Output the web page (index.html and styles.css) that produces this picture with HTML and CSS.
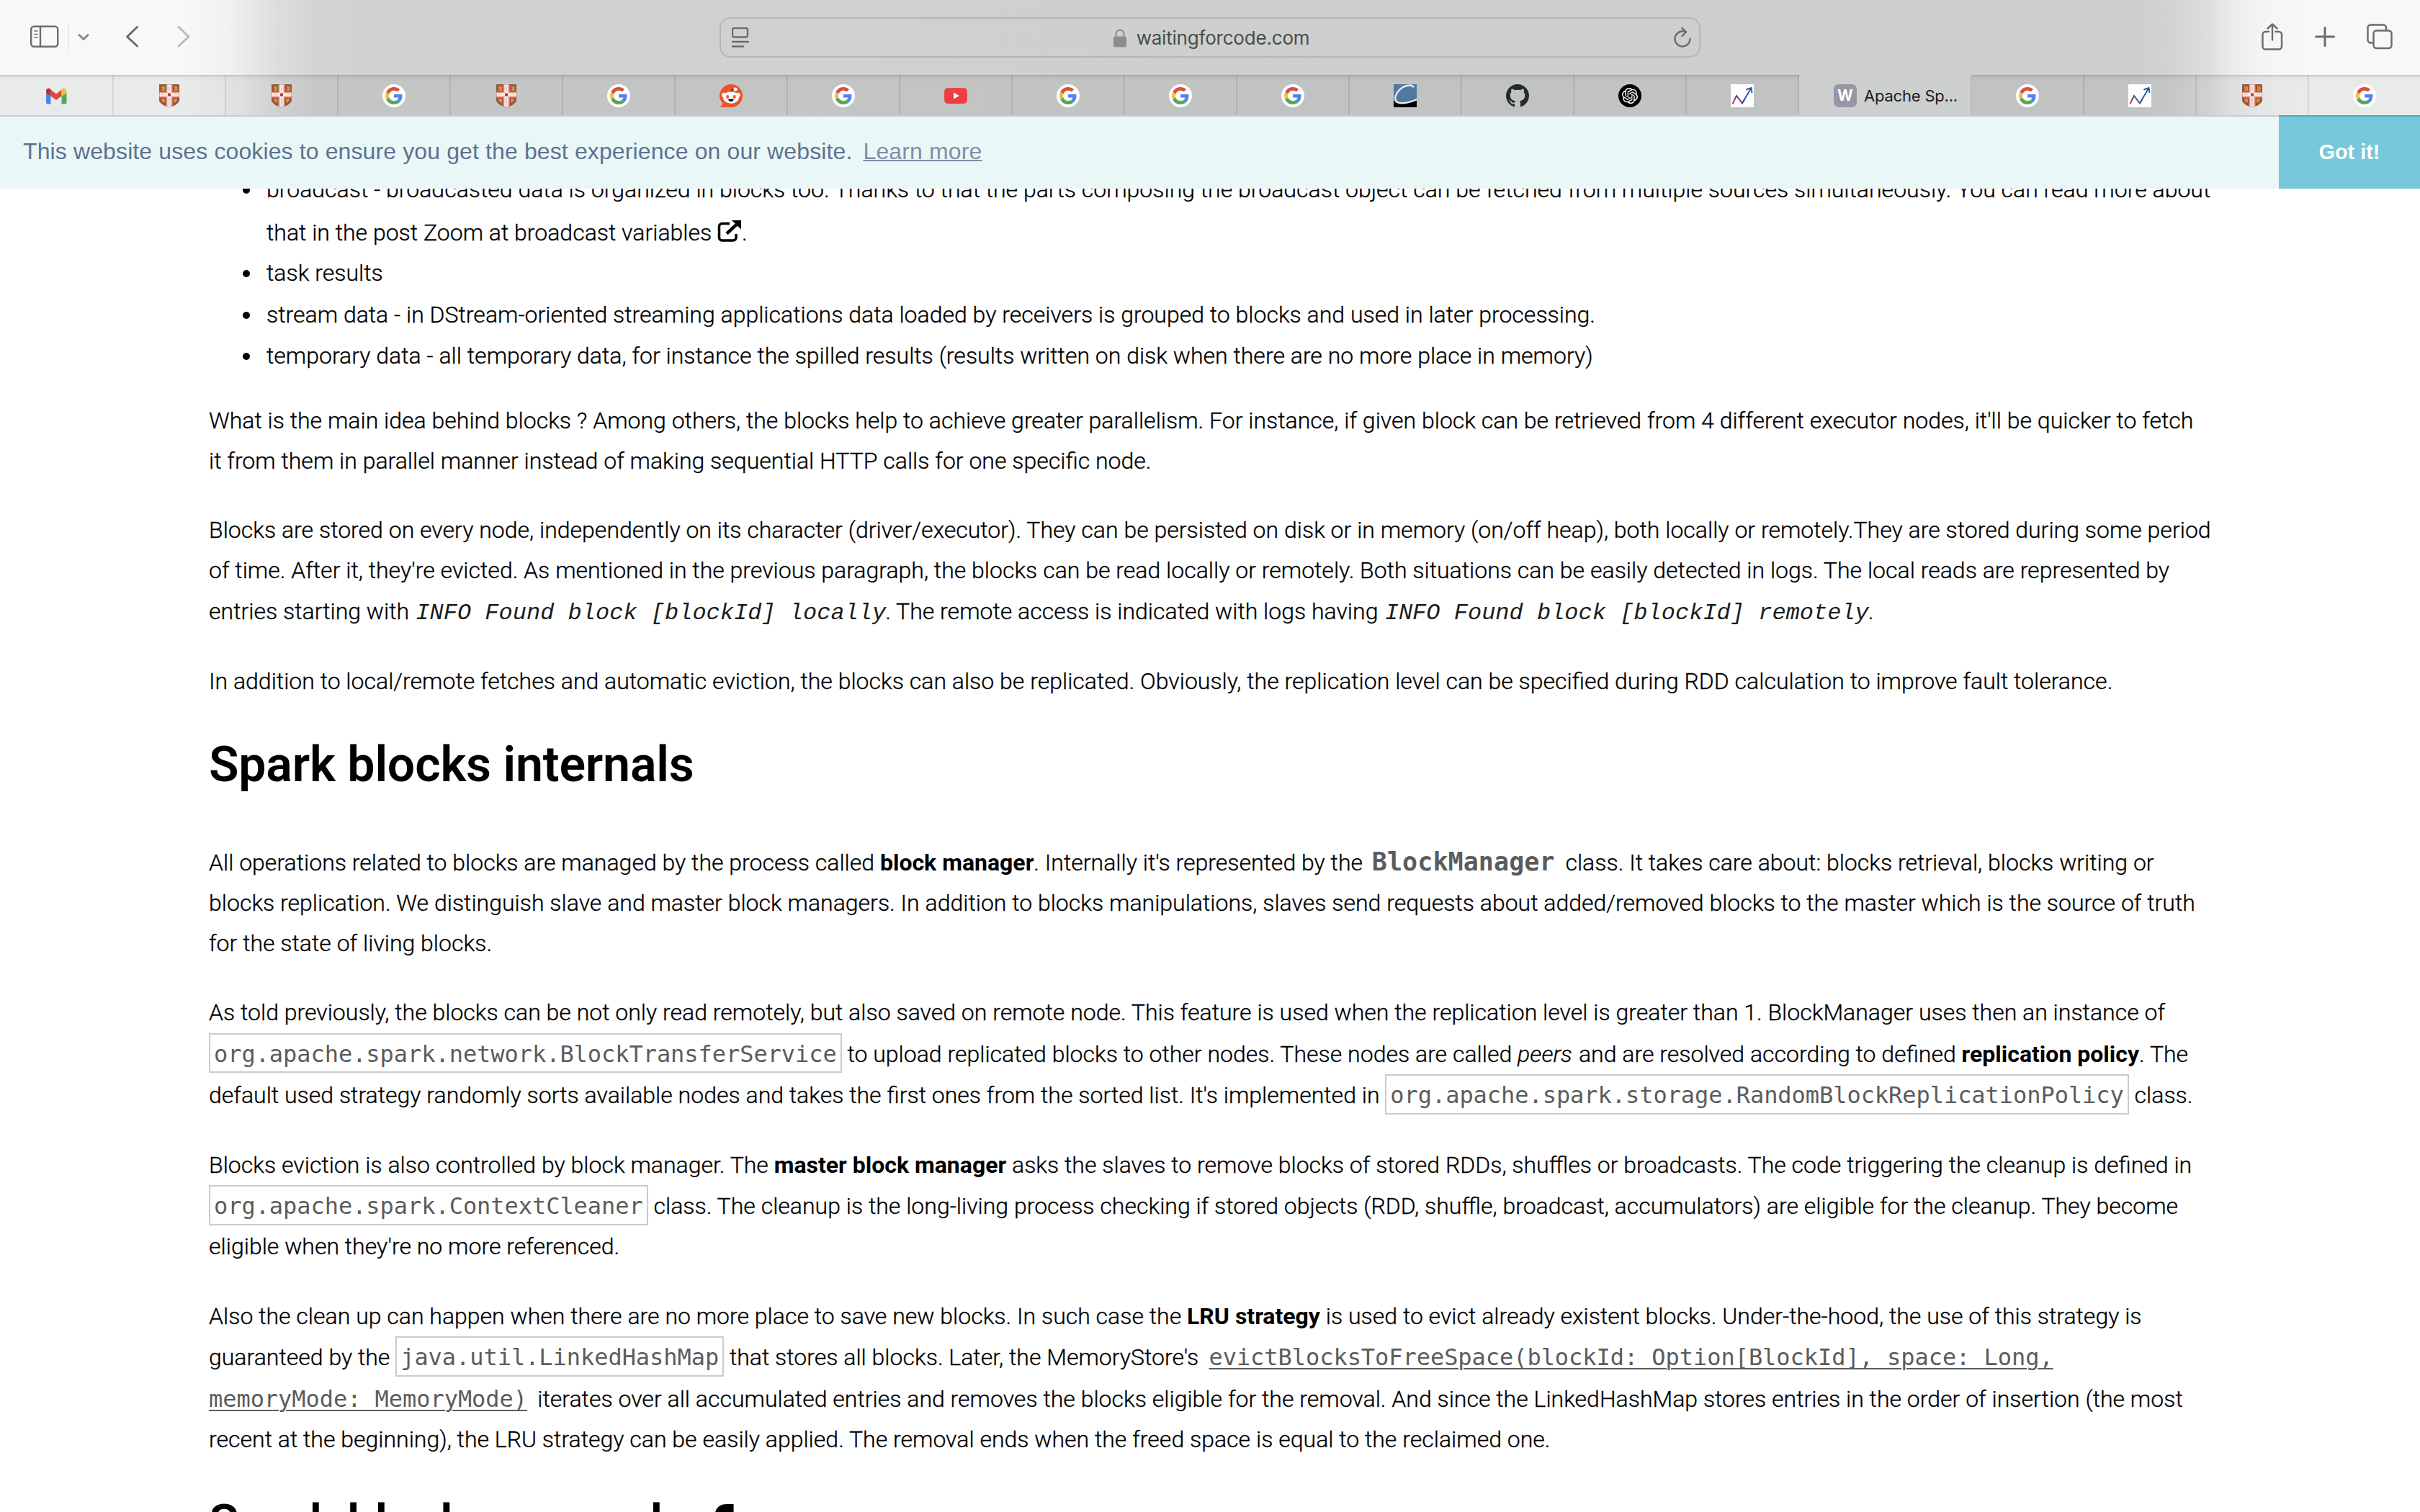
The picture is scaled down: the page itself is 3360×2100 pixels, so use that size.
FILE: index.html
```html
<!DOCTYPE html>
<html lang="en">
<head>
<meta charset="utf-8">
<title>Apache Spark blocks explained</title>
<link rel="stylesheet" href="styles.css">
</head>
<body>
<svg class="sprite" aria-hidden="true">
  <symbol id="gmail" viewBox="0 0 32 32">
    <path fill="#4f83ee" d="M2 12v13.500a2 2 0 0 0 2 2h4.500V16z"/>
    <path fill="#56a65a" d="M23.500 27.500H28.500a2 2 0 0 0 2-2V12l-7 4.500z"/>
    <path fill="#d94c3d" d="M8.500 7.500l7.500 6 7.500-6V16.500L16 22 8.500 16.500z"/>
    <path fill="#b5302a" d="M2 12V9c0-3 3.500-4.500 6.500-2v9.500z"/>
    <path fill="#f1bd42" d="M23.500 7c3-2.500 7-1 7 2v3l-7 4.500z"/>
  </symbol>
  <symbol id="shield" viewBox="0 0 32 32">
    <path fill="#b5442a" stroke="#8a6257" stroke-width="1.500" d="M2.700 .7h26.600v22.300c-2 4-7 7-13.300 8.300C9.700 30 4.700 27 2.700 23z"/>
    <path fill="#bf9a40" d="M4.500 3h5.500v6H4.500l1.500-3zM22 3h5.500v6H22l2-3zM5 20h5v6l-3-1-2-3zM22 20h5v2l-2 3-3 1z"/>
    <path fill="#ee9184" d="M11.500 .5h9V10.500h9v8h-9V30.500l-4.500 1.200-4.500-1.200V18.500h-9v-8h9z"/>
    <path fill="#eceeee" d="M13.300 .5h5.400V12h10.800v4.800h-10.800v14l-2.700.8-2.700-.8V16.800H2.500V12h10.800z"/>
    <path fill="none" stroke="#b1b5b8" stroke-width="1" d="M15 3l2 2-2 2 2 2M5 15l2-2 2 2M23 15l2-2 2 2M15 19l2 2-2 2 2 2-2 2 2 2"/>
    <path fill="#c5361f" d="M14 12.500h4v4h-4z"/>
  </symbol>
  <symbol id="google" viewBox="0 0 64 64">
    <circle cx="32" cy="32" r="32" fill="#fff"/>
    <g transform="translate(8 8)">
      <path fill="#d94f3f" d="M24 9.500c3.540 0 6.710 1.220 9.210 3.600l6.850-6.850C35.900 2.380 30.470 0 24 0 14.620 0 6.510 5.380 2.560 13.220l7.980 6.190C12.430 13.720 17.740 9.500 24 9.500z"/>
      <path fill="#4f84ee" d="M46.980 24.550c0-1.570-.15-3.090-.38-4.550H24v9.020h12.940c-.58 2.960-2.260 5.480-4.780 7.180l7.730 6c4.510-4.180 7.090-10.360 7.090-17.650z"/>
      <path fill="#f1bd42" d="M10.530 28.590c-.48-1.450-.76-2.990-.76-4.590s.27-3.140.76-4.590l-7.980-6.190C.92 16.460 0 20.120 0 24c0 3.880.92 7.540 2.560 10.780l7.970-6.190z"/>
      <path fill="#58a65b" d="M24 48c6.480 0 11.930-2.130 15.890-5.810l-7.730-6c-2.150 1.450-4.920 2.300-8.160 2.300-6.260 0-11.570-4.220-13.470-9.910l-7.980 6.190C6.510 42.620 14.620 48 24 48z"/>
    </g>
  </symbol>
  <symbol id="reddit" viewBox="0 0 32 32">
    <path fill="#ec5428" d="M16 0a16 16 0 1 1 0 32H3c-1.300 0-1.900-1-1-2l2.700-2.700A16 16 0 0 1 16 0z"/>
    <circle cx="6.500" cy="15" r="3.300" fill="#fff"/><circle cx="25.500" cy="15" r="3.300" fill="#fff"/>
    <ellipse cx="16" cy="18.500" rx="11" ry="8.300" fill="#f6f9fb"/>
    <path fill="none" stroke="#2a2a2c" stroke-width="1.300" d="M16 10.500c.2-2.300 1.500-3.300 4-3"/>
    <circle cx="22" cy="7" r="2.500" fill="#fff"/>
    <ellipse cx="11.200" cy="17.500" rx="1.900" ry="2.400" fill="#ec5428"/><ellipse cx="20.800" cy="17.500" rx="1.900" ry="2.400" fill="#ec5428"/>
    <path fill="#0a0a12" d="M12 20.800q4-.7 8 0-.8 3.200-4 3.200t-4-3.200z"/>
  </symbol>
  <symbol id="youtube" viewBox="0 0 32 32">
    <path fill="#ee3f40" d="M4.500 5.300Q16 4.700 27.500 5.300q4 .3 4.200 4 .6 6.700 0 13.400-.2 3.700-4.200 4Q16 27.300 4.500 26.700q-4-.3-4.200-4-.6-6.700 0-13.400.2-3.700 4.200-4z"/>
    <path fill="#fff" d="M13 11.500l7.700 4.500-7.700 4.500z"/>
  </symbol>
  <symbol id="comet" viewBox="0 0 32 32">
    <path fill="#51789f" d="M0 0h32v32H0z"/>
    <path fill="#000" d="M0 22q2 6 13 4.500Q24 25 32 21v11H0z"/>
    <path fill="none" stroke="#e4ecf3" stroke-width="2.400" d="M27.500 4.500C27 1 20 0 12 4.500 2 12 0 21 4.500 24.500c6 4 18 .5 28-3.500"/>
  </symbol>
  <symbol id="github" viewBox="0 0 16 16">
    <path fill="#262a30" d="M8 0C3.580 0 0 3.580 0 8c0 3.540 2.290 6.530 5.470 7.590.4.070.55-.17.55-.38 0-.19-.01-.82-.01-1.490-2.010.37-2.530-.49-2.690-.94-.09-.23-.48-.94-.82-1.130-.28-.15-.68-.52-.01-.53.63-.01 1.080.58 1.230.82.72 1.210 1.870.87 2.330.66.07-.52.28-.87.51-1.070-1.780-.2-3.640-.89-3.640-3.950 0-.87.31-1.590.82-2.150-.08-.2-.36-1.020.08-2.120 0 0 .67-.21 2.200.82.64-.18 1.320-.27 2-.27s1.360.09 2 .27c1.530-1.040 2.200-.82 2.200-.82.44 1.100.16 1.920.08 2.120.51.56.82 1.270.82 2.150 0 3.070-1.870 3.750-3.650 3.950.29.25.54.73.54 1.480 0 1.070-.01 1.930-.01 2.200 0 .21.15.46.55.38A8.010 8.010 0 0 0 16 8c0-4.420-3.580-8-8-8z"/>
  </symbol>
  <symbol id="openai" viewBox="0 0 32 32">
    <circle cx="16" cy="16" r="16"/>
    <path fill="#fff" transform="translate(5 5) scale(.917)" d="M22.2819 9.8211a5.9847 5.9847 0 0 0-.5157-4.9108 6.0462 6.0462 0 0 0-6.5098-2.9A6.0651 6.0651 0 0 0 4.9807 4.1818a5.9847 5.9847 0 0 0-3.9977 2.9 6.0462 6.0462 0 0 0 .7427 7.0966 5.98 5.98 0 0 0 .511 4.9107 6.051 6.051 0 0 0 6.5146 2.9001A5.9847 5.9847 0 0 0 13.2599 24a6.0557 6.0557 0 0 0 5.7718-4.2058 5.9894 5.9894 0 0 0 3.9977-2.9001 6.0557 6.0557 0 0 0-.7475-7.0729zm-9.022 12.6081a4.4755 4.4755 0 0 1-2.8764-1.0408l.1419-.0804 4.7783-2.7582a.7948.7948 0 0 0 .3927-.6813v-6.7369l2.02 1.1686a.071.071 0 0 1 .038.052v5.5826a4.504 4.504 0 0 1-4.4945 4.4944zm-9.6607-4.1254a4.4708 4.4708 0 0 1-.5346-3.0137l.142.0852 4.783 2.7582a.7712.7712 0 0 0 .7806 0l5.8428-3.3685v2.3324a.0804.0804 0 0 1-.0332.0615L9.74 19.9502a4.4992 4.4992 0 0 1-6.1408-1.6464zM2.3408 7.8956a4.485 4.485 0 0 1 2.3655-1.9728V11.6a.7664.7664 0 0 0 .3879.6765l5.8144 3.3543-2.0201 1.1685a.0757.0757 0 0 1-.071 0l-4.8303-2.7865A4.504 4.504 0 0 1 2.3408 7.872zm16.5963 3.8558L13.1038 8.364 15.1192 7.2a.0757.0757 0 0 1 .071 0l4.8303 2.7913a4.4944 4.4944 0 0 1-.6765 8.1042v-5.6772a.79.79 0 0 0-.407-.667zm2.0107-3.0231l-.142-.0852-4.7735-2.7818a.7759.7759 0 0 0-.7854 0L9.409 9.2297V6.8974a.0662.0662 0 0 1 .0284-.0615l4.8303-2.7866a4.4992 4.4992 0 0 1 6.6802 4.66zM8.3065 12.863l-2.02-1.1638a.0804.0804 0 0 1-.038-.0567V6.0742a4.4992 4.4992 0 0 1 7.3757-3.4537l-.142.0805L8.704 5.459a.7948.7948 0 0 0-.3927.6813zm1.0976-2.3654l2.602-1.4998 2.6069 1.4998v2.9994l-2.5974 1.4997-2.6067-1.4997Z"/>
  </symbol>
  <symbol id="chart" viewBox="0 0 32 32">
    <path fill="#fff" d="M0 0h32v32H0z"/>
    <g fill="none" stroke-width="1.900">
      <path stroke="#c9353a" d="M2.500 27.500L5.500 21"/>
      <path stroke="#50457f" d="M5.300 21.500L8 16l8 10.500 3.500-6"/>
      <path stroke="#2157a8" d="M17 24.500L28 6M21.500 7.500L28.500 5l1 7"/>
    </g>
  </symbol>
</svg>

<header class="browser">
  <div class="toolbar">
    <div class="toolbar-left">
      <svg class="ico sidebar" viewBox="0 0 40 32"><rect x="1.200" y="1.700" width="37" height="28" rx="4"/><path d="M14 2v28"/><path class="thin" d="M6 8h4M6 12.500h4M6 17h4"/></svg>
      <span class="divider"></span>
      <svg class="ico chev" viewBox="0 0 16 12"><path d="M2 2.500l6 6 6-6"/></svg>
      <svg class="ico back" viewBox="0 0 20 32"><path d="M16.500 2.500L2.500 16l14 13"/></svg>
      <svg class="ico forward" viewBox="0 0 20 32"><path d="M3 2.500L17 16 3 29"/></svg>
    </div>
    <div class="address">
      <svg class="ico reader" viewBox="0 0 24 28"><rect x="1" y="1" width="21" height="12.500" rx="2.500"/><path d="M0 20h23M0 26.500h16"/></svg>
      <span class="host">
        <svg class="lock" viewBox="0 0 18 26"><path fill="none" stroke="#8b8c8c" stroke-width="2" d="M3.500 12V7.500a5.500 6 0 0 1 11 0V12"/><rect y="10.500" width="18" height="15" rx="2.500" fill="#8b8c8c"/></svg>
        <span>waitingforcode.com</span>
      </span>
      <svg class="ico reload" viewBox="0 0 24 28"><path d="M22.500 16a10.500 10.500 0 1 1-10.500-10.500h4.500M11.500 1.200L17 6.500l-5.500 5.500"/></svg>
    </div>
    <div class="toolbar-right">
      <svg class="ico share" viewBox="0 0 30 38"><path d="M10 12H5.500A4 4 0 0 0 1.500 16v16.500a4 4 0 0 0 4 4h18.500a4 4 0 0 0 4-4V16a4 4 0 0 0-4-4H19.500M15 23.500V1.800M8.500 7.500L15 1.500l6.500 6"/></svg>
      <svg class="ico plus" viewBox="0 0 28 28"><path d="M14 1.500v25M1.500 14h25"/></svg>
      <svg class="ico tabs-ico" viewBox="0 0 36 36"><rect x="9.500" y="9.500" width="25" height="24.500" rx="4"/><path d="M7.500 26.500H5.500a4 4 0 0 1-4-4v-17a4 4 0 0 1 4-4H23a4 4 0 0 1 4 4V8"/></svg>
    </div>
  </div>
  <nav class="tabs">
    <span class="tab"><svg class="fav"><use href="#gmail"/></svg></span>
    <span class="tab"><svg class="fav"><use href="#shield"/></svg></span>
    <span class="tab"><svg class="fav"><use href="#shield"/></svg></span>
    <span class="tab"><svg class="fav"><use href="#google"/></svg></span>
    <span class="tab"><svg class="fav"><use href="#shield"/></svg></span>
    <span class="tab"><svg class="fav"><use href="#google"/></svg></span>
    <span class="tab"><svg class="fav"><use href="#reddit"/></svg></span>
    <span class="tab"><svg class="fav"><use href="#google"/></svg></span>
    <span class="tab"><svg class="fav"><use href="#youtube"/></svg></span>
    <span class="tab"><svg class="fav"><use href="#google"/></svg></span>
    <span class="tab"><svg class="fav"><use href="#google"/></svg></span>
    <span class="tab"><svg class="fav"><use href="#google"/></svg></span>
    <span class="tab"><svg class="fav"><use href="#comet"/></svg></span>
    <span class="tab"><svg class="fav"><use href="#github"/></svg></span>
    <span class="tab"><svg class="fav"><use href="#openai"/></svg></span>
    <span class="tab"><svg class="fav"><use href="#chart"/></svg></span>
    <span class="tab active"><span class="letter">W</span><span class="tab-title">Apache Sp...</span></span>
    <span class="tab"><svg class="fav"><use href="#google"/></svg></span>
    <span class="tab"><svg class="fav"><use href="#chart"/></svg></span>
    <span class="tab"><svg class="fav"><use href="#shield"/></svg></span>
    <span class="tab last"><svg class="fav"><use href="#google"/></svg></span>
  </nav>
</header>

<div class="cookie">
  <p class="cookie-text">This website uses cookies to ensure you get the best experience on our website. <a class="learn">Learn more</a></p>
  <a class="got-it">Got it!</a>
</div>

<main class="article">
  <ul class="list">
    <li><span class="line">broadcast - broadcasted data is organized in blocks too. Thanks to that the parts composing the broadcast object can be fetched from multiple sources simultaneously. You can read more about</span>
      <span class="line after-icon">that in the post Zoom at broadcast variables <svg class="ext" viewBox="0 0 34 30"><path fill="none" stroke="#000" stroke-width="3.500" d="M17 4.500H6.500a4 4 0 0 0-4 4V24a4 4 0 0 0 4 4H22a4 4 0 0 0 4-4v-5"/><path stroke="#000" stroke-width="4.500" d="M13 18.500L27 5.500"/><path d="M20 0h13v12.500z"/></svg>.</span></li>
    <li><span class="line">task results</span></li>
    <li class="gap-m"><span class="line">stream data - in DStream-oriented streaming applications data loaded by receivers is grouped to blocks and used in later processing.</span></li>
    <li class="gap-s"><span class="line">temporary data - all temporary data, for instance the spilled results (results written on disk when there are no more place in memory)</span></li>
  </ul>
  <p class="para first">
    <span class="line">What is the main idea behind blocks ? Among others, the blocks help to achieve greater parallelism. For instance, if given block can be retrieved from 4 different executor nodes, it'll be quicker to fetch</span>
    <span class="line">it from them in parallel manner instead of making sequential HTTP calls for one specific node.</span>
  </p>
  <p class="para">
    <span class="line">Blocks are stored on every node, independently on its character (driver/executor). They can be persisted on disk or in memory (on/off heap), both locally or remotely.They are stored during some period</span>
    <span class="line">of time. After it, they're evicted. As mentioned in the previous paragraph, the blocks can be read locally or remotely. Both situations can be easily detected in logs. The local reads are represented by</span>
    <span class="line with-log">entries starting with <i class="log">INFO Found block [blockId] locally</i>. The remote access is indicated with logs having <i class="log">INFO Found block [blockId] remotely</i>.</span>
  </p>
  <p class="para">
    <span class="line">In addition to local/remote fetches and automatic eviction, the blocks can also be replicated. Obviously, the replication level can be specified during RDD calculation to improve fault tolerance.</span>
  </p>
  <h2 class="heading">Spark blocks internals</h2>
  <p class="para lead">
    <span class="line">All operations related to blocks are managed by the process called <b>block manager</b>. Internally it's represented by the <b class="code-strong">BlockManager</b> class. It takes care about: blocks retrieval, blocks writing or</span>
    <span class="line">blocks replication. We distinguish slave and master block managers. In addition to blocks manipulations, slaves send requests about added/removed blocks to the master which is the source of truth</span>
    <span class="line">for the state of living blocks.</span>
  </p>
  <p class="para">
    <span class="line">As told previously, the blocks can be not only read remotely, but also saved on remote node. This feature is used when the replication level is greater than 1. BlockManager uses then an instance of</span>
    <span class="line tall"><code class="code">org.apache.spark.network.BlockTransferService</code> to upload replicated blocks to other nodes. These nodes are called <i>peers</i> and are resolved according to defined <b>replication policy</b>. The</span>
    <span class="line tall">default used strategy randomly sorts available nodes and takes the first ones from the sorted list. It's implemented in <code class="code">org.apache.spark.storage.RandomBlockReplicationPolicy</code> class.</span>
  </p>
  <p class="para">
    <span class="line">Blocks eviction is also controlled by block manager. The <b>master block manager</b> asks the slaves to remove blocks of stored RDDs, shuffles or broadcasts. The code triggering the cleanup is defined in</span>
    <span class="line tall"><code class="code">org.apache.spark.ContextCleaner</code> class. The cleanup is the long-living process checking if stored objects (RDD, shuffle, broadcast, accumulators) are eligible for the cleanup. They become</span>
    <span class="line">eligible when they're no more referenced.</span>
  </p>
  <p class="para">
    <span class="line">Also the clean up can happen when there are no more place to save new blocks. In such case the <b>LRU strategy</b> is used to evict already existent blocks. Under-the-hood, the use of this strategy is</span>
    <span class="line tall">guaranteed by the <code class="code">java.util.LinkedHashMap</code> that stores all blocks. Later, the MemoryStore's <a class="code-link start">evictBlocksToFreeSpace(blockId: Option[BlockId], space: Long,</a></span>
    <span class="line tall"><a class="code-link end">memoryMode: MemoryMode)</a> iterates over all accumulated entries and removes the blocks eligible for the removal. And since the LinkedHashMap stores entries in the order of insertion (the most</span>
    <span class="line">recent at the beginning), the LRU strategy can be easily applied. The removal ends when the freed space is equal to the reclaimed one.</span>
  </p>
  <h2 class="heading">Spark blocks example <span class="anchor">¶</span></h2>
</main>
</body>
</html>
```
FILE: styles.css
```css
* { box-sizing: border-box; }
body {
  margin: 0;
  width: 3360px;
  height: 2100px;
  overflow: hidden;
  display: flex;
  flex-direction: column;
  background: #fff;
  color: #000;
  font-family: Roboto, sans-serif;
}
.sprite { display: none; }

/* Browser chrome */
.browser {
  flex: none;
  height: 162px;
  background: linear-gradient(90deg, #f7f9f8 0, #f7f9f8 250px, #f2f4f3 305px, #ececeb 335px, #dcdedd 385px, #d2d3d3 440px, #d0d2d1 520px, #cfd1d1 1200px, #cdcfce 1900px, #cdcfce 2500px, #cdcfcf 2960px, #d2d3d4 3020px, #dcdedd 3065px, #ececed 3100px, #f4f6f5 3150px, #f7f9f8 3200px);
}
.toolbar { height: 104px; display: grid; grid-template-columns: 999px 1362px 999px; align-items: center; }
.toolbar-left, .toolbar-right { height: 104px; display: flex; align-items: center; }
.ico { flex: none; fill: none; stroke: #6b6d6c; stroke-width: 2.4; stroke-linecap: round; stroke-linejoin: round; }
.sidebar { width: 40px; height: 32px; margin: -2px 0 0 42px; }
.sidebar .thin { stroke-width: 1.7; }
.divider { width: 2px; height: 36px; margin-left: 12px; background: #e9ebea; }
.chev { width: 16px; height: 12px; margin: 0 0 0 12px; stroke: #88898d; stroke-width: 3; }
.back { width: 20px; height: 32px; margin: -3px 0 0 50px; stroke-width: 3; }
.forward { width: 20px; height: 32px; margin: -3px 0 0 51px; stroke: #b9bbba; stroke-width: 3; }
.address {
  height: 56px;
  border: 2px solid #b5b7b6;
  border-radius: 15px;
  display: flex;
  align-items: center;
  justify-content: space-between;
  padding: 0 11px 0 15px;
}
.reader { width: 24px; height: 28px; }
.reload { width: 24px; height: 28px; margin-top: -1px; }
.host { display: flex; align-items: center; gap: 14px; padding-top: 2px; font: 400 26px/36px Inter, sans-serif; letter-spacing: -.2px; color: #4b4d4c; }
.lock { width: 18px; height: 26px; }
.toolbar-right { justify-content: flex-end; padding-right: 38px; }
.share { width: 30px; height: 38px; margin: -3px 44px 0 0; }
.plus { width: 28px; height: 28px; margin: -3px 44px 0 0; stroke-width: 3; }
.tabs-ico { width: 36px; height: 36px; margin-top: -3px; }

.tabs { height: 58px; display: flex; border-bottom: 2px solid #c3d0d0; }
.tab {
  width: 156px;
  height: 56px;
  padding-top: 2px;
  display: flex;
  align-items: center;
  justify-content: center;
  border-right: 2px solid rgba(0, 0, 0, .09);
  background: linear-gradient(rgba(0, 0, 0, .14), rgba(0, 0, 0, .025) 4px, rgba(0, 0, 0, 0) 10px), rgba(0, 0, 0, .055);
}
.tab:first-child { width: 158px; }
.tab.last { width: 154px; border-right: 0; }
.tab.active { width: 240px; background: none; justify-content: flex-start; padding-left: 48px; gap: 10px; }
.fav { width: 32px; height: 32px; }
.letter { width: 32px; height: 32px; border-radius: 7px; background: #9796a3; color: #fff; font: 700 21px/32px Inter, sans-serif; text-align: center; }
.tab-title { font: 400 22px/30px Inter, sans-serif; color: #1c1d1d; white-space: nowrap; letter-spacing: -.2px; }

/* Cookie banner */
.cookie { flex: none; height: 100px; display: flex; justify-content: space-between; background: #eaf7f7; color: #5c7291; }
.cookie-text { margin: 0; padding: 30px 0 0 32px; font: 400 32px/36px "Liberation Sans", sans-serif; letter-spacing: .12px; white-space: nowrap; }
.learn { margin-left: 6px; color: #7d8fa8; text-decoration: underline; text-decoration-thickness: 2px; }
.got-it { width: 196px; margin-top: -2px; border-top: 2px solid #4fa9bc; background: #76c8da; color: #fff; font: 700 28.8px/98px "Liberation Sans", sans-serif; text-align: center; }

/* Article */
.article { flex: 1; min-height: 0; overflow: hidden; padding-left: 290px; font-size: 32px; line-height: 56px; font-weight: 300; -webkit-text-stroke: .3px; }
.line { display: block; height: 56px; white-space: nowrap; }
.line.tall { height: 57.6px; padding-top: 1.6px; }
.line.with-log { height: 57px; padding-top: 1px; }
.line.after-icon { height: 60px; padding-top: 4px; }
.list { margin: -27.5px 0 0; padding: 0 0 0 74px; }
.list li { padding-left: 6px; }
.gap-s { padding-top: 1px; }
.gap-m { padding-top: 2.6px; }
.ext { width: 34px; height: 30px; vertical-align: -2px; }
.para { margin: 40.4px 0 0; }
.para.first { margin-top: 34px; }
.para.lead { margin-top: 68px; }
.heading { margin: 48px 0 0; font-size: 68px; line-height: 80px; font-weight: 600; letter-spacing: -.2px; white-space: nowrap; -webkit-text-stroke: 0; }
.anchor { margin-left: 17px; }
b { font-weight: 700; -webkit-text-stroke: 0; }
i { margin-right: 1.5px; }
.log { margin: 0 -1px 0 1.5px; font-family: "Liberation Mono", monospace; font-weight: 400; line-height: 0; -webkit-text-stroke: 0; color: #1c1c1c; }
.code, .code-strong, .code-link { font-family: "DejaVu Sans Mono", monospace; line-height: 0; color: #5c5c5c; letter-spacing: -.05px; -webkit-text-stroke: 0; }
.code { font-size: 32px; padding: 8px 5px 5.500px; border: 2px solid #cbcbcb; }
.code-strong { font-size: 35px; margin: 0 7px 0 5px; letter-spacing: .08px; }
.code-link { text-decoration: underline; text-decoration-thickness: 2px; text-underline-offset: 4px; }
.code-link.start { margin-left: 6.500px; }
.code-link.end { margin-right: 6.500px; }
```
